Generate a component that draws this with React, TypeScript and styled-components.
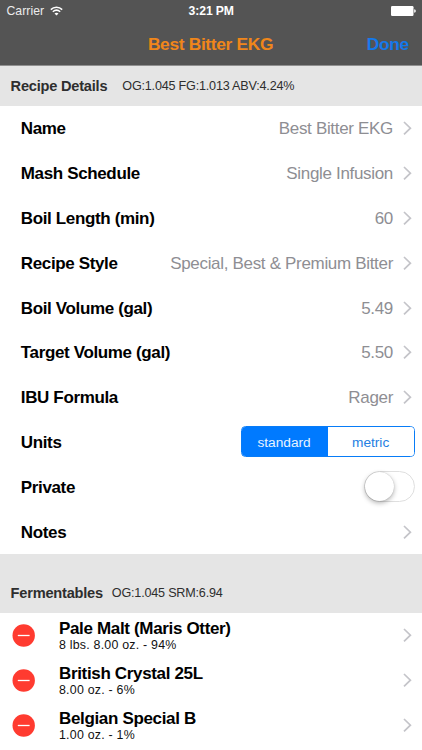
import React, { useState } from "react";
import styled, { createGlobalStyle } from "styled-components";

const GlobalStyle = createGlobalStyle`
  * { box-sizing: border-box; }
  body {
    margin: 0;
    background: #fff;
    font-family: "Liberation Sans", Arial, sans-serif;
    color: #000;
    overflow: hidden;
  }
`;

const Screen = styled.div`
  width: 422px;
  height: 750px;
  overflow: hidden;
  background: #fff;
`;

const TopBar = styled.header`
  height: 65.5px;
  background: #545454;
  border-bottom: 1px solid #909090;
`;

const StatusBar = styled.div`
  height: 22px;
  padding: 0 6px 0 6.5px;
  display: grid;
  grid-template-columns: 1fr auto 1fr;
  align-items: center;
  color: #fff;
`;

const Carrier = styled.div`
  display: flex;
  align-items: center;
  gap: 5.5px;
  font-size: 12.2px;
  line-height: 22px;
  color: #ececec;
  letter-spacing: 0.05px;
`;

const Clock = styled.div`
  font-size: 12.2px;
  line-height: 22px;
  font-weight: bold;
  letter-spacing: -0.1px;
`;

const BatterySlot = styled.div`
  display: flex;
  justify-content: flex-end;
`;

const NavBar = styled.nav`
  height: 43px;
  padding: 0 13px 0 12px;
  display: grid;
  grid-template-columns: 1fr auto 1fr;
  align-items: center;
`;

const NavTitle = styled.h1`
  grid-column: 2;
  margin: 0;
  font-size: 17.4px;
  line-height: 44px;
  font-weight: bold;
  letter-spacing: -0.35px;
  color: #f0861a;
`;

const DoneButton = styled.button`
  justify-self: end;
  border: 0;
  padding: 0;
  background: none;
  font: bold 17.4px/44px "Liberation Sans", Arial, sans-serif;
  letter-spacing: -0.3px;
  color: #1479ec;
`;

const SectionHeader = styled.div<{ $height: number }>`
  height: ${(p) => p.$height}px;
  padding: 0 10.6px 11px;
  display: flex;
  align-items: flex-end;
  background: #e5e5e5;
  color: #2e2e2e;
  line-height: 18px;
`;

const SectionTitle = styled.h2<{ $gap: number }>`
  margin: 0 ${(p) => p.$gap}px 0 0;
  font-size: 14.6px;
  font-weight: bold;
  letter-spacing: -0.22px;
`;

const SectionInfo = styled.span`
  font-size: 12.6px;
  letter-spacing: -0.2px;
`;

const Row = styled.div`
  height: 44.8px;
  padding: 0 10px 0 20.8px;
  display: flex;
  align-items: center;
`;

const Label = styled.span`
  flex: 1;
  padding-top: 2px;
  font-size: 17px;
  line-height: 20px;
  font-weight: bold;
  letter-spacing: -0.36px;
  white-space: nowrap;
`;

const Value = styled.span`
  padding-top: 2px;
  margin-right: 10px;
  font-size: 17px;
  line-height: 20px;
  letter-spacing: -0.32px;
  color: #8e8e93;
  white-space: nowrap;
`;

const Segments = styled.div`
  width: 173.5px;
  height: 31px;
  margin-right: -2.5px;
  display: grid;
  grid-template-columns: 1fr 1fr;
  border: 1px solid #087cf7;
  border-radius: 4.5px;
  overflow: hidden;
`;

const Segment = styled.button<{ $active: boolean }>`
  border: 0;
  padding: 1px ${(p) => (p.$active ? 1.6 : 0)}px 0 0;
  background: ${(p) => (p.$active ? "#007aff" : "#fff")};
  color: ${(p) => (p.$active ? "#e8f3ff" : "#2580e2")};
  font: 13.7px/29px "Liberation Sans", Arial, sans-serif;
`;

const Toggle = styled.button`
  width: 51.5px;
  height: 31px;
  margin-right: -3px;
  padding: 0;
  border: 1.5px solid #dfdfdf;
  border-radius: 16px;
  background: #fff;
  display: flex;
  align-items: center;
`;

const Knob = styled.span`
  width: 29px;
  height: 29px;
  border-radius: 50%;
  background: #fff;
  box-shadow: 0 2px 5px rgba(0, 0, 0, 0.3), 0 0 1px rgba(0, 0, 0, 0.25);
`;

const ItemRow = styled(Row)`
  padding-left: 12px;
`;

const RemoveButton = styled.button`
  width: 23px;
  height: 23px;
  margin: 1px 24px 0 0;
  padding: 0;
  border: 0;
  background: none;
  display: flex;
`;

const ItemText = styled.div`
  flex: 1;
  padding-top: 2px;
`;

const ItemName = styled.div`
  font-size: 17px;
  line-height: 19px;
  font-weight: bold;
  letter-spacing: -0.34px;
`;

const ItemAmount = styled.div`
  font-size: 12.4px;
  line-height: 15px;
  letter-spacing: 0.22px;
  color: #111;
`;

const Chevron = () => (
  <svg width="9" height="14" viewBox="0 0 9 14" fill="none" stroke="#c4c4c9" strokeWidth="1.7">
    <path d="M1 1 L7.4 7.2 L1 13.4" />
  </svg>
);

const MinusIcon = () => (
  <svg width="23" height="23" viewBox="0 0 23 23">
    <circle cx="11.7" cy="11.5" r="11.2" fill="#ff3b30" />
    <path d="M5.8 11.5 H17.6" stroke="#fff" strokeWidth="1.3" />
  </svg>
);

const WifiIcon = () => (
  <svg width="13" height="10" viewBox="0 0 13 10" fill="none" stroke="#fff" strokeWidth="1.5">
    <path d="M0.8 3.6 C4 0.4 9 0.4 12.2 3.6" />
    <path d="M2.8 5.8 C5 3.8 8 3.8 10.2 5.8" />
    <path d="M4.5 7.5 C5.7 6.5 7.3 6.5 8.5 7.5 L6.5 9.5 Z" fill="#fff" stroke="none" />
  </svg>
);

const BatteryIcon = () => (
  <svg width="25" height="10" viewBox="0 0 25 10" fill="#fff">
    <rect x="0" y="0" width="22.5" height="10" rx="1.2" />
    <path d="M23.2 3.2 Q24.8 3.5 24.8 5 Q24.8 6.5 23.2 6.8 Z" />
  </svg>
);

const details = [
  ["Name", "Best Bitter EKG"],
  ["Mash Schedule", "Single Infusion"],
  ["Boil Length (min)", "60"],
  ["Recipe Style", "Special, Best & Premium Bitter"],
  ["Boil Volume (gal)", "5.49"],
  ["Target Volume (gal)", "5.50"],
  ["IBU Formula", "Rager"],
];

const fermentables = [
  ["Pale Malt (Maris Otter)", "8 lbs. 8.00 oz. - 94%"],
  ["British Crystal 25L", "8.00 oz. - 6%"],
  ["Belgian Special B", "1.00 oz. - 1%"],
];

export default function App() {
  const [unit, setUnit] = useState("standard");

  return (
    <Screen>
      <GlobalStyle />
      <TopBar>
        <StatusBar>
          <Carrier>
            Carrier <WifiIcon />
          </Carrier>
          <Clock>3:21 PM</Clock>
          <BatterySlot>
            <BatteryIcon />
          </BatterySlot>
        </StatusBar>
        <NavBar>
          <NavTitle>Best Bitter EKG</NavTitle>
          <DoneButton>Done</DoneButton>
        </NavBar>
      </TopBar>

      <SectionHeader $height={40.5}>
        <SectionTitle $gap={15}>Recipe Details</SectionTitle>
        <SectionInfo>OG:1.045 FG:1.013 ABV:4.24%</SectionInfo>
      </SectionHeader>
      {details.map(([label, value]) => (
        <Row key={label}>
          <Label>{label}</Label>
          <Value>{value}</Value>
          <Chevron />
        </Row>
      ))}
      <Row>
        <Label>Units</Label>
        <Segments>
          {["standard", "metric"].map((name) => (
            <Segment key={name} $active={unit === name} onClick={() => setUnit(name)}>
              {name}
            </Segment>
          ))}
        </Segments>
      </Row>
      <Row>
        <Label>Private</Label>
        <Toggle aria-label="Private">
          <Knob />
        </Toggle>
      </Row>
      <Row>
        <Label>Notes</Label>
        <Chevron />
      </Row>

      <SectionHeader $height={58.6}>
        <SectionTitle $gap={9}>Fermentables</SectionTitle>
        <SectionInfo>OG:1.045 SRM:6.94</SectionInfo>
      </SectionHeader>
      {fermentables.map(([name, amount]) => (
        <ItemRow key={name}>
          <RemoveButton aria-label={`Remove ${name}`}>
            <MinusIcon />
          </RemoveButton>
          <ItemText>
            <ItemName>{name}</ItemName>
            <ItemAmount>{amount}</ItemAmount>
          </ItemText>
          <Chevron />
        </ItemRow>
      ))}
    </Screen>
  );
}
